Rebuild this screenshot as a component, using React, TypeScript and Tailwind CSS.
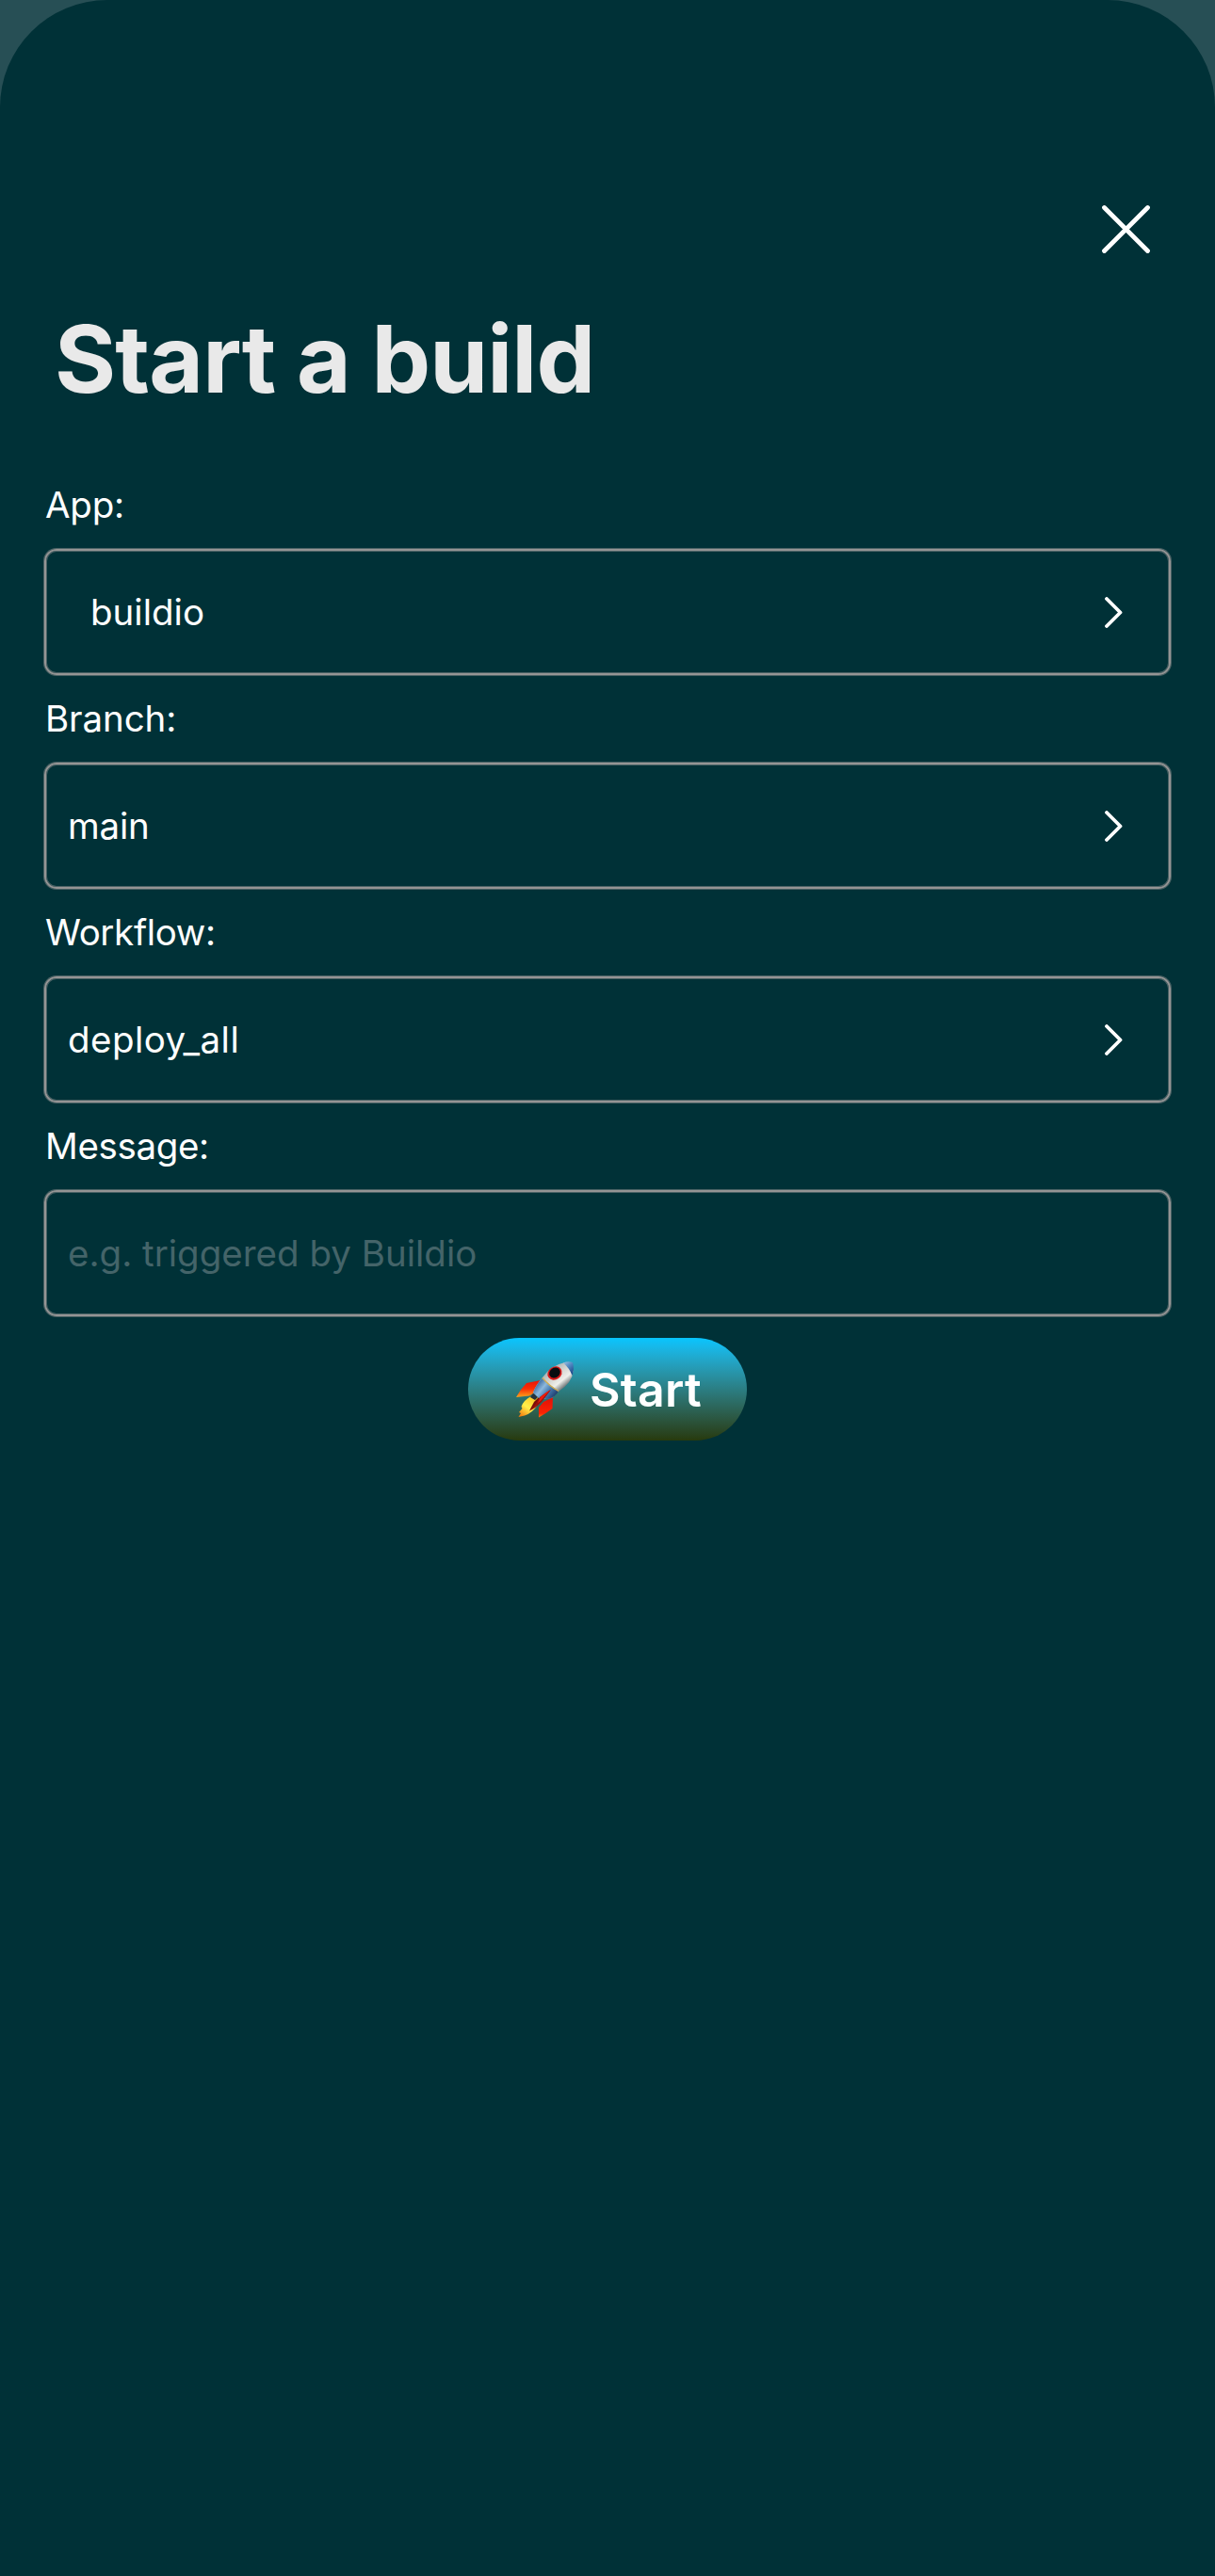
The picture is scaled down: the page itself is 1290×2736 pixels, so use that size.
import React from "react";

function Chevron() {
  return (
    <svg className="h-[33px] w-[19px]" viewBox="0 0 19 33" fill="none" stroke="#fff" strokeWidth="3.8" strokeLinecap="round" strokeLinejoin="round">
      <path d="M2 2 L16.5 16.5 L2 31" />
    </svg>
  );
}

type FieldProps = {
  label: string;
  value: string;
  labelClass: string;
  valueClass: string;
  chevron?: boolean;
};

function Field({ label, value, labelClass, valueClass, chevron = true }: FieldProps) {
  return (
    <div className="h-[227px] pt-[22px]">
      <div className={`ml-px h-[48px] text-[38.5px] leading-[48px] text-white ${labelClass}`}>{label}</div>
      <div className="mt-[23px] flex h-[134px] items-center justify-between rounded-[13px] border-2 border-[#949494] pr-[49px] shadow-[0_0_0_1px_#94949480,inset_0_0_0_1px_#94949480]">
        <span className={`text-[38.5px] leading-[48px] ${valueClass}`}>{value}</span>
        {chevron && <Chevron />}
      </div>
    </div>
  );
}

function Rocket() {
  return (
    <svg className="h-[60px] w-[62px]" viewBox="0 0 62 60">
      <defs>
        <linearGradient id="body" x1="30" y1="8" x2="48" y2="30" gradientUnits="userSpaceOnUse">
          <stop offset="0" stopColor="#9aa3a8" />
          <stop offset=".5" stopColor="#d9d9d4" />
          <stop offset=".75" stopColor="#efefea" />
          <stop offset="1" stopColor="#6f7577" />
        </linearGradient>
        <linearGradient id="blue" x1="20" y1="24" x2="40" y2="40" gradientUnits="userSpaceOnUse">
          <stop offset="0" stopColor="#2f5f98" />
          <stop offset=".35" stopColor="#8db8dc" />
          <stop offset=".6" stopColor="#4a7fb5" />
          <stop offset="1" stopColor="#1b3766" />
        </linearGradient>
        <linearGradient id="nose" x1="50" y1="0" x2="60" y2="12" gradientUnits="userSpaceOnUse">
          <stop offset="0" stopColor="#a9c8e4" />
          <stop offset=".5" stopColor="#4f86c0" />
          <stop offset="1" stopColor="#1f4c8c" />
        </linearGradient>
        <linearGradient id="fin" x1="0" y1="0" x2="0" y2="1">
          <stop offset="0" stopColor="#e81408" />
          <stop offset=".5" stopColor="#fb2e04" />
          <stop offset="1" stopColor="#ffa51c" />
        </linearGradient>
        <linearGradient id="finRight" x1="0" y1="0" x2="0" y2="1">
          <stop offset="0" stopColor="#e01008" />
          <stop offset=".8" stopColor="#fb2404" />
          <stop offset="1" stopColor="#ff7a10" />
        </linearGradient>
        <linearGradient id="flame" x1="18" y1="38" x2="4" y2="58" gradientUnits="userSpaceOnUse">
          <stop offset="0" stopColor="#ffc928" />
          <stop offset=".5" stopColor="#fff04a" />
          <stop offset="1" stopColor="#f47a0c" />
        </linearGradient>
      </defs>
      <path d="M26 20 L11 23 Q5 29 0 38 L14 36.500 L20 33Z" fill="url(#fin)" />
      <path d="M39 38 L38.500 50 Q32 55 24 59.500 L24 49 L29 43Z" fill="url(#finRight)" />
      <path d="M16 37 Q8 41 5.500 48 L6.500 50 L3 54 L5 55 L2.500 59 L9 57.500 Q17 55 23 46 L23 38Z" fill="url(#flame)" />
      <path d="M24 38 L24 44 L14 52.500 L19 43Z" fill="#7a0c08" />
      <path d="M18 34 L23.500 37.500 L20 41 L15 38Z" fill="#26313b" />
      <path d="M28 17 Q37 4 52 1 L60.500 10 Q60 22 45 32 L38 39 L30 40 L18 33 Q21 25 28 17Z" fill="url(#body)" />
      <path d="M27.500 18 Q35 25 45 31.500 Q42 38 33 40 L24 39 L18 33 Q21 25 27.500 18Z" fill="url(#blue)" />
      <path d="M28 17.500 Q35 26 45 31.500" fill="none" stroke="#d2ae50" strokeWidth="1.2" />
      <path d="M50 1.500 Q55 -.5 60 1 Q62 8 59.500 15 Q56.500 7 50 1.500Z" fill="url(#nose)" />
      <path d="M37 30 L27 43 Q19 51 14 52.500 L20 46 L25 38 Q30 34 37 30Z" fill="#9c0f0a" />
      <path d="M36.500 30 L26 42 L23 44 L26 37.500 Q31 33 36.500 30Z" fill="#ee1c0c" />
      <ellipse cx="41" cy="12.500" rx="8" ry="6.800" transform="rotate(-35 41 12.500)" fill="#d81818" />
      <ellipse cx="41" cy="12" rx="6.100" ry="5.200" transform="rotate(-35 41 12)" fill="#090c10" />
    </svg>
  );
}

export default function App() {
  return (
    <div className="h-[2736px] w-[1290px] bg-[#274f55] font-['Inter','Liberation_Sans',sans-serif]">
      <main className="flex h-full flex-col rounded-t-[114px] bg-[#003137] px-[47px] pt-[217px]">
        <div className="flex h-[53px] justify-end pr-[21px]">
          <button aria-label="Close" className="h-[53px] w-[53px]">
            <svg className="h-[53px] w-[53px]" viewBox="0 0 53 53" fill="none" stroke="#fff" strokeWidth="4.800" strokeLinecap="round">
              <path d="M3.500 3.500 L49.500 49.500 M49.500 3.500 L3.500 49.500" />
            </svg>
          </button>
        </div>
        <h1 className="mt-[51px] ml-[11px] h-[120px] text-[99.5px] leading-[120px] font-bold tracking-[-0.9px] whitespace-nowrap text-[#e9e9e9]">Start a build</h1>
        <div className="mt-[49px]">
          <Field label="App:" value="buildio" labelClass="tracking-[-0.2px]" valueClass="ml-[47px] text-white" />
          <Field label="Branch:" value="main" labelClass="tracking-[-0.1px]" valueClass="ml-[23px] tracking-[-0.2px] text-white" />
          <Field label="Workflow:" value="deploy_all" labelClass="tracking-[-0.35px]" valueClass="ml-[23px] tracking-[0.45px] text-white" />
          <Field label="Message:" value="e.g. triggered by Buildio" labelClass="tracking-[-0.35px]" valueClass="ml-[23px] text-[#446469]" chevron={false} />
        </div>
        <button className="mt-[23px] flex h-[109px] w-[296px] items-center self-center rounded-full bg-linear-to-b from-[#06c5ff] to-[#273a0c] pl-[51px] text-white">
          <Rocket />
          <span className="ml-[16px] text-[50px] leading-[60px] font-semibold tracking-[0.3px] whitespace-nowrap">Start</span>
        </button>
      </main>
    </div>
  );
}
